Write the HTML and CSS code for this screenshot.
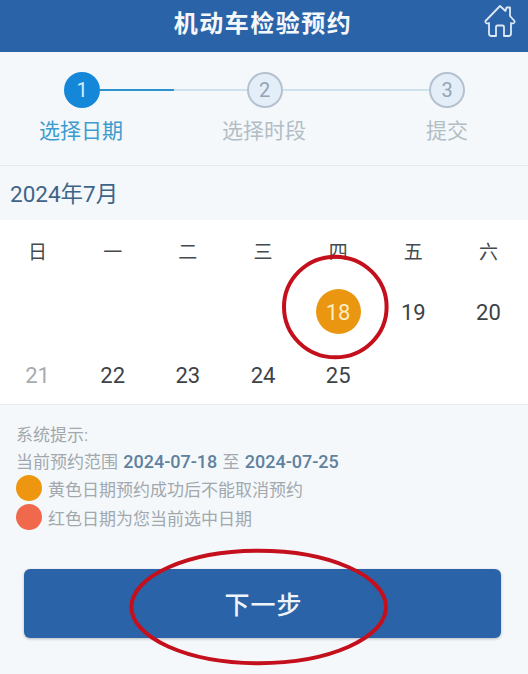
FILE: index.html
```html
<!DOCTYPE html>
<html lang="zh-CN">
    <head>
        <title>机动车检验预约</title>
        <meta charset="UTF-8">
        <meta name="viewport" content="width=device-width, initial-scale=1">
        <link rel="stylesheet" href="styles.css">
    </head>

    <body>
        <div class="page">
            <header class="topbar">
                <h1>机动车检验预约</h1>
                <svg class="home-icon" viewBox="0 0 32 34" fill="none" stroke="#dce9f5" stroke-width="1.8" stroke-linejoin="round" stroke-linecap="round">
                    <path d="M16 2 L1.5 17 Q1 19 3 19.5 L5 19 L5 29.5 Q5 32 7.5 32 L12 32 L12 23 Q12 21.5 13.5 21.5 L18.5 21.5 Q20 21.5 20 23 L20 32 L24.5 32 Q27 32 27 29.5 L27 19 L29 19.5 Q31 19 30.5 17 L26 12 L26 3.5 L22.5 3.5 L21.5 7 Z"/>
                </svg>
            </header>

            <section class="steps">
                <div class="step-track">
                    <span class="step-dot step-dot-active">1</span>
                    <span class="step-line step-line-half"></span>
                    <span class="step-dot">2</span>
                    <span class="step-line"></span>
                    <span class="step-dot">3</span>
                </div>
                <div class="step-labels">
                    <span class="step-label-active">选择日期</span>
                    <span>选择时段</span>
                    <span>提交</span>
                </div>
            </section>

            <div class="month">2024年7月</div>

            <section class="calendar">
                <div class="cal-head">日</div>
                <div class="cal-head">一</div>
                <div class="cal-head">二</div>
                <div class="cal-head">三</div>
                <div class="cal-head">四</div>
                <div class="cal-head">五</div>
                <div class="cal-head">六</div>

                <div class="cal-day cal-start"><span class="day-yellow">18</span></div>
                <div class="cal-day">19</div>
                <div class="cal-day">20</div>

                <div class="cal-day cal-past">21</div>
                <div class="cal-day">22</div>
                <div class="cal-day">23</div>
                <div class="cal-day">24</div>
                <div class="cal-day">25</div>
            </section>

            <section class="notes">
                <p class="note-title">系统提示:</p>
                <p class="note-range">当前预约范围 <b>2024-07-18</b> 至 <b>2024-07-25</b></p>
                <p class="legend"><i class="legend-dot dot-yellow"></i>黄色日期预约成功后不能取消预约</p>
                <p class="legend"><i class="legend-dot dot-red"></i>红色日期为您当前选中日期</p>
            </section>

            <button class="next-btn">下一步</button>

            <!-- red marks drawn over the screenshot -->
            <svg class="marks" viewBox="0 0 528 674" fill="none" stroke="#c4101c" stroke-width="4">
                <ellipse cx="335.3" cy="307" rx="51.3" ry="50.3"/>
                <ellipse cx="258.7" cy="607" rx="127.3" ry="56.2"/>
            </svg>
        </div>
    </body>
</html>
```

FILE: styles.css
```css
* {
    box-sizing: border-box;
}
body {
    margin: 0;
    font-family: Roboto, "Noto Sans CJK SC", sans-serif;
    background-color: #f4f8fb;
}
.page {
    position: relative;
    width: 528px;
    height: 674px;
    overflow: hidden;
}
.topbar {
    position: relative;
    height: 52px;
    padding-bottom: 9px;
    padding-right: 2px;
    background-color: #2b63a8;
    display: flex;
    align-items: center;
    justify-content: center;
}
.topbar h1 {
    margin: 0;
    font-size: 24px;
    font-weight: 700;
    letter-spacing: 1.5px;
    color: #f4f8fb;
}
.home-icon {
    position: absolute;
    top: 4px;
    right: 12px;
    width: 32px;
    height: 34px;
}

.steps {
    height: 114px;
    padding-top: 20px;
    border-bottom: 1px solid #e6eaed;
}
.step-track {
    display: flex;
    align-items: center;
    padding-left: 64px;
    padding-right: 63px;
}
.step-dot {
    flex: none;
    width: 36px;
    height: 36px;
    border-radius: 50%;
    border: 2px solid #b4c2cf;
    background-color: #e3eef8;
    color: #93a4b4;
    font-size: 20px;
    display: flex;
    align-items: center;
    justify-content: center;
}
.step-dot-active {
    border: 0;
    background-color: #1487d8;
    color: #d8ecf9;
}
.step-line {
    flex: 1;
    height: 2px;
    background-color: #cfe1ed;
}
.step-line-half {
    background: linear-gradient(to right, #2b94cf 50%, #cfe1ed 50%);
}
.step-labels {
    display: grid;
    grid-template-columns: 86px 280px 86px;
    padding-left: 38px;
    margin-top: 8px;
    font-size: 21px;
    line-height: 30px;
    color: #b3bdc5;
    text-align: center;
}
.step-label-active {
    color: #3d9ccf;
}

.month {
    height: 54px;
    padding-left: 10px;
    padding-bottom: 2px;
    display: flex;
    align-items: center;
    font-size: 22.5px;
    color: #3e6588;
}

.calendar {
    height: 185px;
    padding-right: 2px;
    background-color: #fff;
    border-bottom: 1px solid #e8ebee;
    display: grid;
    grid-template-columns: repeat(7, 1fr);
    grid-template-rows: 60px 63px 62px;
    text-align: center;
}
.cal-head {
    display: flex;
    align-items: center;
    justify-content: center;
    font-size: 19px;
    color: #454a4f;
}
.cal-day {
    padding-top: 2px;
    display: flex;
    align-items: center;
    justify-content: center;
    font-size: 22px;
    color: #3d4246;
}
.cal-start {
    grid-column-start: 5;
}
.cal-past {
    color: #a6abaf;
}
.day-yellow {
    width: 45px;
    height: 45px;
    margin-top: -2px;
    padding-top: 1px;
    border-radius: 50%;
    background-color: #ea9610;
    color: #fbeec6;
    display: flex;
    align-items: center;
    justify-content: center;
}

.notes {
    padding: 17px 0 0 16px;
    font-size: 17px;
    color: #a2a8ad;
}
.notes p {
    margin: 0;
}
.note-title {
    height: 27px;
    line-height: 27px;
}
.note-range {
    height: 26px;
    line-height: 26px;
    white-space: nowrap;
    word-spacing: 1px;
}
.notes b {
    font-size: 18px;
    font-weight: 500;
    color: #5f819e;
}
.notes .legend {
    height: 26px;
    margin-bottom: 3px;
    display: flex;
    align-items: center;
    gap: 6px;
}
.legend-dot {
    width: 26px;
    height: 26px;
    border-radius: 50%;
}
.dot-yellow {
    background-color: #ee960f;
}
.dot-red {
    background-color: #f0694d;
}

.next-btn {
    display: block;
    width: 477px;
    height: 69px;
    margin: 39px 0 0 24px;
    padding: 0 0 2px 2px;
    border: 0;
    border-radius: 6px;
    background-color: #2b63a8;
    box-shadow: 0 1px 3px rgba(0,0,0,0.25);
    color: #eef4fa;
    font-family: inherit;
    font-size: 25px;
    font-weight: 500;
    letter-spacing: 1px;
}

.marks {
    position: absolute;
    top: 0;
    left: 0;
    width: 528px;
    height: 674px;
    pointer-events: none;
}
```
